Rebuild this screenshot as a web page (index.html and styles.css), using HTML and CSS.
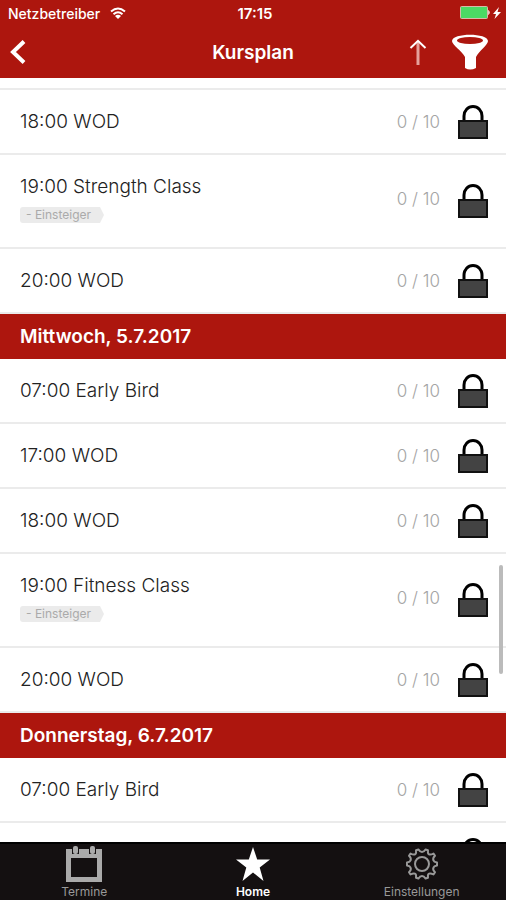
FILE: index.html
```
<!DOCTYPE html>
<html lang="de">
<head>
    <meta charset="UTF-8">
    <meta name="viewport" content="width=device-width, initial-scale=1.0">
    <title>Kursplan</title>
    <link rel="stylesheet" href="styles.css">
</head>
<body>
    <!-- Shared icons -->
    <svg class="sprite" aria-hidden="true">
        <symbol id="lock" viewBox="0 0 30 34">
            <path d="M6 17V11a9 9.500 0 0 1 18 0v6" fill="none" stroke="#000" stroke-width="3"/>
            <rect x="1" y="16" width="28" height="17" fill="#434343" stroke="#111" stroke-width="2"/>
        </symbol>
    </svg>

    <header class="header">
        <div class="status">
            <div class="carrier">
                <span>Netzbetreiber</span>
                <svg class="wifi" width="16" height="12" viewBox="0 0 16 12" fill="none" stroke="#fff" stroke-width="2">
                    <path d="M1 4.500Q8 -1.500 15 4.500M3.500 7.200Q8 3.200 12.500 7.200"/>
                    <path d="M8 12L5 9Q8 6.500 11 9Z" fill="#fff" stroke="none"/>
                </svg>
            </div>
            <span class="clock">17:15</span>
            <div class="battery">
                <svg width="42" height="14" viewBox="0 0 42 14">
                    <rect x="0.500" y="0.500" width="27" height="12" rx="1" fill="#4cd964" stroke="#d9b9a8"/>
                    <path d="M28.500 4.500q2 2 0 4z" fill="#e8c4c0" stroke="#e8c4c0"/>
                    <path d="M39 1L33 8h3l-1.500 5L41 6h-3.500z" fill="#fff"/>
                </svg>
            </div>
        </div>
        <div class="navbar">
            <button class="back" aria-label="Zurück">
                <svg width="16" height="24" viewBox="0 0 16 24" fill="none" stroke="#fff" stroke-width="4">
                    <path d="M14 1.500L3 12l11 10.500"/>
                </svg>
            </button>
            <h1 class="title">Kursplan</h1>
            <div class="actions">
                <button aria-label="Nach oben">
                    <svg width="18" height="26" viewBox="0 0 18 26" fill="none" stroke="#fff" stroke-width="2">
                        <path d="M9 2v24" stroke="#e5a19b" stroke-width="3"/>
                        <path d="M1.500 9L9 1.800 16.500 9"/>
                    </svg>
                </button>
                <button aria-label="Filter">
                    <svg width="36" height="36" viewBox="0 0 36 36">
                        <path d="M0 7C0 -1.500 36 -1.500 36 7c0 4-9 10-12 16v11q-6 3-11 0V23C10 17 0 11 0 7z" fill="#fff"/>
                        <ellipse cx="18" cy="6.500" rx="13" ry="3.500" fill="#ad160e"/>
                    </svg>
                </button>
            </div>
        </div>
    </header>

    <main class="schedule">
        <ul class="courses">
            <li class="course course-cut"></li>
            <li class="course">
                <div class="name">18:00 WOD</div>
                <span class="count">0 / 10</span>
                <svg class="lock"><use href="#lock"/></svg>
            </li>
            <li class="course course-tagged">
                <div class="name">19:00 Strength Class<span class="tag">- Einsteiger</span></div>
                <span class="count">0 / 10</span>
                <svg class="lock"><use href="#lock"/></svg>
            </li>
            <li class="course">
                <div class="name">20:00 WOD</div>
                <span class="count">0 / 10</span>
                <svg class="lock"><use href="#lock"/></svg>
            </li>
        </ul>

        <h2 class="day">Mittwoch, 5.7.2017</h2>
        <ul class="courses">
            <li class="course">
                <div class="name">07:00 Early Bird</div>
                <span class="count">0 / 10</span>
                <svg class="lock"><use href="#lock"/></svg>
            </li>
            <li class="course">
                <div class="name">17:00 WOD</div>
                <span class="count">0 / 10</span>
                <svg class="lock"><use href="#lock"/></svg>
            </li>
            <li class="course">
                <div class="name">18:00 WOD</div>
                <span class="count">0 / 10</span>
                <svg class="lock"><use href="#lock"/></svg>
            </li>
            <li class="course course-tagged">
                <div class="name">19:00 Fitness Class<span class="tag">- Einsteiger</span></div>
                <span class="count">0 / 10</span>
                <svg class="lock"><use href="#lock"/></svg>
            </li>
            <li class="course">
                <div class="name">20:00 WOD</div>
                <span class="count">0 / 10</span>
                <svg class="lock"><use href="#lock"/></svg>
            </li>
        </ul>

        <h2 class="day">Donnerstag, 6.7.2017</h2>
        <ul class="courses">
            <li class="course">
                <div class="name">07:00 Early Bird</div>
                <span class="count">0 / 10</span>
                <svg class="lock"><use href="#lock"/></svg>
            </li>
            <li class="course">
                <div class="name"></div>
                <svg class="lock"><use href="#lock"/></svg>
            </li>
        </ul>
        <div class="scrollbar"></div>
    </main>

    <nav class="tabs">
        <a class="tab" href="#termine">
            <svg width="36" height="36" viewBox="0 0 36 36">
                <path d="M0 3h36v33H0z" fill="#aaa"/>
                <path d="M5 12h26v19H5z" fill="#141011"/>
                <path d="M6 2v6h7V2M23 2v6h7V2" fill="#141011"/>
                <rect x="7" y="0" width="5" height="8" rx="2" fill="#aaa"/>
                <rect x="24" y="0" width="5" height="8" rx="2" fill="#aaa"/>
            </svg>
            Termine
        </a>
        <a class="tab active" href="#home">
            <svg width="36" height="36" viewBox="0 0 36 36">
                <path d="M18 1l4.200 12.500H35l-10.300 8L28.500 35 18 26.500 7.500 35l3.800-13.500L1 13.500h12.800z" fill="#fff"/>
            </svg>
            Home
        </a>
        <a class="tab" href="#einstellungen">
            <svg width="36" height="36" viewBox="0 0 36 36" fill="none" stroke="#999" stroke-width="2" stroke-linejoin="round">
                <path d="M18 6Q20 6 21.500 3.500L24 4.300Q23.500 7.500 25 8.300Q26.500 9.200 29.500 7.500L31 9.800Q28.500 12 29.400 14.300Q30 16 33 16.500V19.500Q30 20 29.400 21.700Q28.500 24 31 26.200L29.500 28.500Q26.500 26.800 25 27.700Q23.500 28.500 24 31.700L21.500 32.500Q20 30 18 30Q16 30 14.500 32.500L12 31.700Q12.500 28.500 11 27.700Q9.500 26.800 6.500 28.500L5 26.200Q7.500 24 6.600 21.700Q6 20 3 19.500V16.500Q6 16 6.600 14.300Q7.500 12 5 9.800L6.500 7.500Q9.500 9.200 11 8.300Q12.500 7.500 12 4.300L14.500 3.500Q16 6 18 6Z"/>
                <circle cx="18" cy="18" r="7"/>
            </svg>
            Einstellungen
        </a>
    </nav>
</body>
</html>
```
FILE: styles.css
```
* {
    box-sizing: border-box;
}
body {
    font-family: Inter, "Liberation Sans", sans-serif;
    margin: 0;
    height: 100vh;
    display: flex;
    flex-direction: column;
    background: #fff;
    color: #222;
}
button {
    display: flex;
    padding: 0;
    border: 0;
    background: none;
    cursor: pointer;
}
.sprite {
    display: none;
}

/* Header */
.header {
    height: 78px;
    flex: none;
    background: #ad160e;
    color: #fff;
}
.status, .navbar {
    display: grid;
    grid-template-columns: 1fr auto 1fr;
    align-items: center;
}
.status {
    height: 26px;
    padding: 0 4px 0 8px;
    font-size: 14px;
    font-weight: 500;
}
.carrier {
    display: flex;
    align-items: center;
    gap: 10px;
}
.clock {
    font-size: 15px;
    font-weight: 600;
}
.battery, .actions {
    display: flex;
    justify-content: flex-end;
    align-items: center;
}
.navbar {
    height: 52px;
    padding: 0 18px;
}
.back {
    margin-left: -8px;
}
.title {
    margin: 0;
    font-size: 19px;
    font-weight: 600;
}
.actions {
    gap: 25px;
}

/* Course list */
.schedule {
    position: relative;
    flex: 1;
    min-height: 0;
    overflow: hidden;
}
.courses {
    margin: 0;
    padding: 0;
    list-style: none;
}
.course {
    display: flex;
    align-items: center;
    height: 65px;
    padding: 0 18px 0 20px;
    border-bottom: 2px solid #ebebeb;
}
.course-cut {
    height: 12px;
}
.course-tagged {
    height: 94px;
}
.name {
    flex: 1;
    font-size: 19px;
    font-weight: 300;
    line-height: 24px;
}
.tag {
    display: block;
    width: 84px;
    height: 16px;
    margin-top: 8px;
    padding-left: 6px;
    background: #ebebeb;
    border-radius: 3px 0 0 3px;
    clip-path: polygon(0 0, 80px 0, 100% 50%, 80px 100%, 0 100%);
    font-size: 12px;
    font-weight: 400;
    line-height: 16px;
    color: #aaa;
}
.count {
    margin-right: 18px;
    font-size: 17px;
    font-weight: 300;
    color: #a4a4a4;
}
.course-tagged .name, .course-tagged .count {
    padding-bottom: 4px;
}
.lock {
    width: 30px;
    height: 34px;
}
.day {
    margin: 0;
    padding: 0 20px;
    background: #ad160e;
    color: #fff;
    font-size: 19px;
    font-weight: 600;
    line-height: 45px;
}
.scrollbar {
    position: absolute;
    top: 487px;
    right: 3px;
    width: 4px;
    height: 109px;
    border-radius: 2px;
    background: #bbb;
}

/* Bottom tabs */
.tabs {
    display: grid;
    grid-template-columns: repeat(3, 1fr);
    height: 58px;
    flex: none;
    background: #141011;
    border-top: 2px solid #000;
}
.tab {
    display: flex;
    flex-direction: column;
    align-items: center;
    gap: 3px;
    padding-top: 2px;
    color: #999;
    font-size: 12px;
    line-height: 14px;
    text-decoration: none;
}
.active {
    color: #fff;
    font-weight: 600;
}
```
